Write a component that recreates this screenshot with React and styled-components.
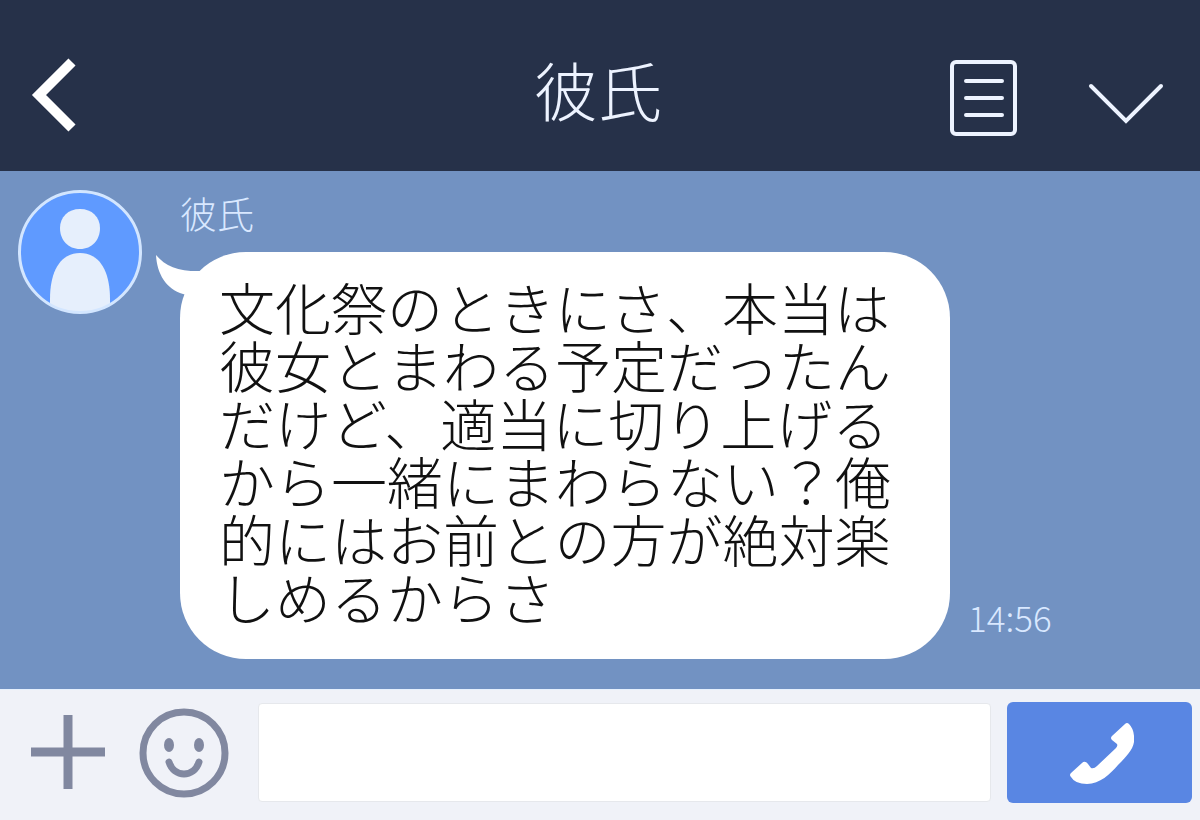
import React from "react";
import styled, { createGlobalStyle } from "styled-components";

const GlobalStyle = createGlobalStyle`
  *, *::before, *::after { box-sizing: border-box; }
  body {
    margin: 0;
    font-family: "Noto Sans CJK JP", sans-serif;
    font-weight: 300;
  }
  svg { display: block; }
`;

const Screen = styled.div`
  display: flex;
  flex-direction: column;
  min-height: 100vh;
  background: #7292c2;
`;

const Header = styled.header`
  display: grid;
  grid-template-columns: 1fr auto 1fr;
  align-items: start;
  padding: 40px 34px 34px 30px;
  background: #263149;
  color: #edf3ff;
`;

const Title = styled.h1`
  margin: 0;
  font-size: 64px;
  line-height: 96px;
  font-weight: 300;
`;

const Actions = styled.div`
  display: flex;
  align-items: center;
  justify-content: flex-end;
  gap: 70px;
  padding-top: 19px;
`;

const IconButton = styled.button`
  display: block;
  flex: none;
  padding: 0;
  border: 0;
  background: none;
  color: ${(p) => p.$color || "#edf3ff"};
  justify-self: start;
  cursor: pointer;
`;

const BackButton = styled(IconButton)`
  padding-top: 17px;
`;

const Chat = styled.main`
  flex: 1;
  padding: 18px;
`;

const Message = styled.article`
  display: flex;
  align-items: flex-start;
  gap: 38px;
`;

const Avatar = styled.div`
  flex: none;
`;

const Body = styled.div`
  flex: 1;
  min-width: 0;
`;

const Sender = styled.div`
  padding-bottom: 15px;
  font-size: 37px;
  line-height: 48px;
  color: #d9e8ff;
`;

const BubbleRow = styled.div`
  display: flex;
  align-items: flex-end;
  gap: 18px;
`;

const Bubble = styled.div`
  position: relative;
  max-width: 770px;
  padding: 25px 39px 34px;
  border-radius: 66px;
  background: #fff;
`;

const Tail = styled.svg`
  position: absolute;
  top: 0;
  left: -26px;
`;

const Text = styled.p`
  margin: 0;
  font-size: 56px;
  line-height: 58px;
  color: #111;
`;

const Time = styled.time`
  padding-bottom: 18px;
  font-size: 35px;
  line-height: 48px;
  color: #d9e8ff;
`;

const Composer = styled.form`
  display: flex;
  align-items: center;
  padding: 12px 8px 17px 30px;
  background: #f0f2f8;
  border-top: 1px solid #e6f0fd;
`;

const Tools = styled.div`
  display: flex;
  align-items: center;
  gap: 32px;
  margin-right: 28px;
`;

const MessageInput = styled.input`
  flex: 1;
  min-width: 0;
  height: 99px;
  margin-right: 16px;
  padding: 0 24px;
  border: 1px solid #e6e8ec;
  border-radius: 4px;
  background: #fff;
  font: inherit;
  font-size: 37px;
  color: #222;
`;

const CallButton = styled.button`
  display: flex;
  align-items: center;
  justify-content: center;
  width: 185px;
  height: 101px;
  padding: 0;
  border: 0;
  border-radius: 6px;
  background: #5986e3;
  color: #fff;
  cursor: pointer;
`;

const BackIcon = () => (
  <svg width="48" height="76" viewBox="0 0 48 76" fill="none" stroke="#fff" strokeWidth="10">
    <path d="M42 5 9 38l33 33" />
  </svg>
);

const NotesIcon = () => (
  <svg width="68" height="78" viewBox="0 0 68 78" fill="none" stroke="currentColor" strokeWidth="4">
    <rect x="2" y="3" width="63" height="72" rx="4" />
    <path d="M16 22h36M16 39h36M16 56h36" strokeLinecap="round" />
  </svg>
);

const ChevronIcon = () => (
  <svg width="78" height="76" viewBox="0 0 78 76" fill="none" stroke="currentColor" strokeWidth="4">
    <path d="m3 26 35 35 35-35" strokeLinecap="round" />
  </svg>
);

const PersonIcon = () => (
  <svg width="124" height="126" viewBox="0 0 124 126">
    <defs>
      <clipPath id="face">
        <circle cx="62" cy="63" r="61" />
      </clipPath>
    </defs>
    <circle cx="62" cy="63" r="60" fill="#5f9aff" />
    <g fill="#e6effc" clipPath="url(#face)">
      <path d="M62 20c12 0 20 8 20 19 0 12-8 21-20 21s-20-9-20-21c0-11 8-19 20-19Z" />
      <path d="M32 126v-16c0-27 10-46 30-46s30 19 30 46v16Z" />
    </g>
    <circle cx="62" cy="63" r="60.5" fill="none" stroke="#d3e6ff" strokeWidth="3" />
  </svg>
);

const PlusIcon = () => (
  <svg width="76" height="76" viewBox="0 0 76 76" fill="none" stroke="currentColor" strokeWidth="9">
    <path d="M38 0v74M1 37h74" />
  </svg>
);

const SmileIcon = () => (
  <svg width="92" height="92" viewBox="0 0 92 92">
    <g fill="none" stroke="currentColor">
      <circle cx="46" cy="46" r="41" strokeWidth="7" />
      <path d="M31 55c5 16 25 16 30 0" strokeWidth="7" strokeLinecap="round" />
    </g>
    <ellipse cx="31" cy="38" rx="5" ry="7" fill="currentColor" />
    <ellipse cx="61" cy="38" rx="5" ry="7" fill="currentColor" />
  </svg>
);

const PhoneIcon = () => (
  <svg width="68" height="64" viewBox="-2 0 68 64" fill="currentColor">
    <path d="M57 3Q59 1 61 3Q67 9 66 21C65 29 57 37 50 44C42 53 32 63 19 63Q7 63 3 56Q1 54 3 52L14 42Q17 39 20 43L23 47Q26 48 29 45L48 27Q50 25 49 23L44 19Q42 17 44 15Z" />
  </svg>
);

export default function App() {
  return (
    <>
      <GlobalStyle />
      <Screen>
        <Header>
          <BackButton type="button" aria-label="戻る">
            <BackIcon />
          </BackButton>
          <Title>彼氏</Title>
          <Actions>
            <IconButton type="button" aria-label="ノート">
              <NotesIcon />
            </IconButton>
            <IconButton type="button" aria-label="メニュー">
              <ChevronIcon />
            </IconButton>
          </Actions>
        </Header>

        <Chat>
          <Message>
            <Avatar>
              <PersonIcon />
            </Avatar>
            <Body>
              <Sender>彼氏</Sender>
              <BubbleRow>
                <Bubble>
                  <Tail width="80" height="60" viewBox="0 0 80 60" fill="#fff" aria-hidden="true">
                    <path d="M2 3C12 15 26 20 50 19L76 8 60 50 29 42C12 37 3 22 2 3Z" />
                  </Tail>
                  <Text>
                    文化祭のときにさ、本当は彼女とまわる予定だったんだけど、適当に切り上げるから一緒にまわらない？俺的にはお前との方が絶対楽しめるからさ
                  </Text>
                </Bubble>
                <Time dateTime="14:56">14:56</Time>
              </BubbleRow>
            </Body>
          </Message>
        </Chat>

        <Composer onSubmit={(e) => e.preventDefault()}>
          <Tools>
            <IconButton type="button" aria-label="追加" $color="#8188a0">
              <PlusIcon />
            </IconButton>
            <IconButton type="button" aria-label="スタンプ" $color="#8188a0">
              <SmileIcon />
            </IconButton>
          </Tools>
          <MessageInput type="text" aria-label="メッセージ" />
          <CallButton type="button" aria-label="通話">
            <PhoneIcon />
          </CallButton>
        </Composer>
      </Screen>
    </>
  );
}
